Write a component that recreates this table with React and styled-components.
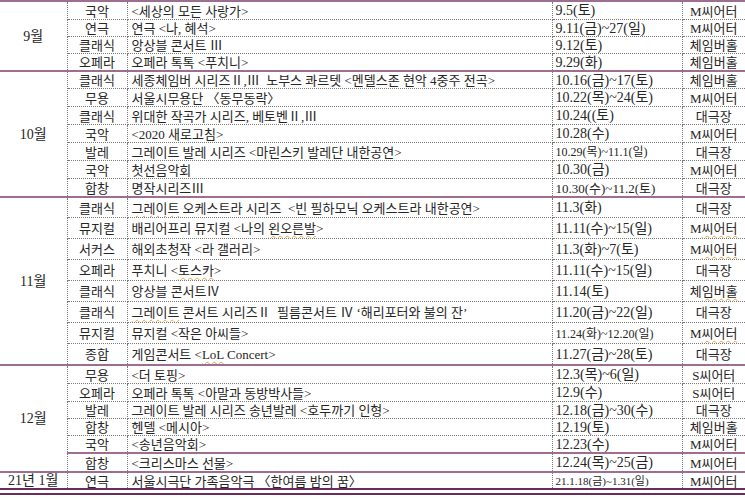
import React from "react";
import styled, { createGlobalStyle } from "styled-components";

const GlobalStyle = createGlobalStyle`
    html, body {
        margin: 0;
        padding: 0;
        background: #fff;
        overflow: hidden;
    }
`

const Page = styled.div`
    width: 745px;
    height: 503px;
    overflow: hidden;
    background: #fff;
`

const Table = styled.table`
    width: 745px;
    table-layout: fixed;
    border-collapse: collapse;
    font-family: "Liberation Serif", "Noto Sans CJK KR", serif;
    font-size: 13px;
    color: #262626;
`

const Col = styled.col`
    width: ${props => props.w}px;
`

// cell padding-top adds to the row, so take it off the height
const Row = styled.tr`
    & > td {
        height: ${props => props.h - 1}px;
        ${props => props.sep && "border-top: 2px solid #9c6f92;"}
        ${props => props.first && "border-top: 2px solid #9c6f92;"}
        ${props => props.last && "border-bottom: 7px double #6a2c5d;"}
    }
`

const Cell = styled.td`
    padding: 1px 0 0;
    line-height: 1;
    border: 1px dotted #7a7a7a;
    vertical-align: middle;
    white-space: nowrap;
    overflow: hidden;
`

const MonthCell = styled(Cell)`
    text-align: center;
    font-size: 14px;
    border-left: none;
    border-bottom: ${props => props.last ? "7px double #6a2c5d" : "2px solid #9c6f92"};
`

const GenreCell = styled(Cell)`
    text-align: center;
`

const TitleCell = styled(Cell)`
    padding-left: 4px;
`

const DateCell = styled(Cell)`
    padding-left: 3px;
    font-size: ${props => props.fs || 14}px;
`

const VenueCell = styled(Cell)`
    text-align: center;
    border-right: none;
`

const Sq = styled.span`
    text-decoration: underline wavy #e6a24c;
    text-decoration-thickness: 1px;
    text-underline-offset: 2px;
`

const venue = v => {
    if (v === "체임버홀") return <>체<Sq>임버홀</Sq></>;
    if (v.endsWith("씨어터")) return <>{v[0]}<Sq>씨어터</Sq></>;
    return v;
}

const rows = [
    { m: "9월", span: 4, h: 17, g: "국악", t: "<세상의 모든 사랑가>", d: "9.5(토)", v: "M씨어터" },
    { h: 16, g: "연극", t: <>연극 &lt;나, <Sq>혜석</Sq>&gt;</>, d: "9.11(금)~27(일)", v: "M씨어터" },
    { h: 16, g: "클래식", t: "앙상블 콘서트 Ⅲ", d: "9.12(토)", v: "체임버홀" },
    { h: 16, g: "오페라", t: "오페라 톡톡 <푸치니>", d: "9.29(화)", v: "체임버홀" },
    { m: "10월", span: 7, h: 16, g: "클래식", t: <><Sq>세종체임버</Sq> 시리즈Ⅱ,Ⅲ&nbsp;&nbsp;<Sq>노부스</Sq> 콰르텟 &lt;멘델스존 현악 4중주 전곡&gt;</>, d: "10.16(금)~17(토)", v: "체임버홀" },
    { h: 17, g: "무용", t: "서울시무용단 〈동무동락〉", d: "10.22(목)~24(토)", v: "M씨어터" },
    { h: 17, g: "클래식", t: "위대한 작곡가 시리즈, 베토벤Ⅱ,Ⅲ", d: "10.24((토)", v: "대극장" },
    { h: 17, g: "국악", t: <>&lt;2020 <Sq>새로고침</Sq>&gt;</>, d: "10.28(수)", v: "M씨어터" },
    { h: 17, g: "발레", t: <><Sq>그레이트</Sq> 발레 시리즈 &lt;마린스키 발레단 내한공연&gt;</>, d: "10.29(목)~11.1(일)", v: "대극장", fs: 12 },
    { h: 17, g: "국악", t: "첫선음악회", d: "10.30(금)", v: "M씨어터" },
    { h: 17, g: "합창", t: "명작시리즈Ⅲ", d: "10.30(수)~11.2(토)", v: "대극장", fs: 13 },
    { m: "11월", span: 8, h: 19, g: "클래식", t: <><Sq>그레이트</Sq> 오케스트라 시리즈&nbsp;&nbsp;&lt;빈 필하모닉 오케스트라 내한공연&gt;</>, d: "11.3(화)", v: "대극장" },
    { h: 20, g: "뮤지컬", t: <>배리어프리 뮤지컬 &lt;나의 <Sq>왼오른발</Sq>&gt;</>, d: "11.11(수)~15(일)", v: "M씨어터" },
    { h: 20, g: "서커스", t: "해외초청작 <라 갤러리>", d: "11.3(화)~7(토)", v: "M씨어터" },
    { h: 20, g: "오페라", t: <>푸치니 &lt;<Sq>토스카</Sq>&gt;</>, d: "11.11(수)~15(일)", v: "대극장" },
    { h: 20, g: "클래식", t: "앙상블 콘서트Ⅳ", d: "11.14(토)", v: "체임버홀" },
    { h: 20, g: "클래식", t: <><Sq>그레이트</Sq> 콘서트 시리즈Ⅱ&nbsp;&nbsp;필름콘서트 Ⅳ &lsquo;해리포터와 불의 잔&rsquo;</>, d: "11.20(금)~22(일)", v: "대극장" },
    { h: 20, g: "뮤지컬", t: "뮤지컬 <작은 아씨들>", d: "11.24(화)~12.20(일)", v: "M씨어터", fs: 12 },
    { h: 20, g: "종합", t: <>게임콘서트 &lt;<Sq>LoL</Sq> Concert&gt;</>, d: "11.27(금)~28(토)", v: "대극장" },
    { m: "12월", span: 6, h: 17, g: "무용", t: "<더 토핑>", d: "12.3(목)~6(일)", v: "S씨어터" },
    { h: 17, g: "오페라", t: <>오페라 톡톡 &lt;<Sq>아말과</Sq> 동방박사들&gt;</>, d: "12.9(수)", v: "S씨어터" },
    { h: 16, g: "발레", t: <><Sq>그레이트</Sq> 발레 시리즈 송년발레 &lt;호두까기 인형&gt;</>, d: "12.18(금)~30(수)", v: "대극장" },
    { h: 16, g: "합창", t: "헨델 <메시아>", d: "12.19(토)", v: "체임버홀" },
    { h: 16, g: "국악", t: "<송년음악회>", d: "12.23(수)", v: "M씨어터" },
    { h: 17, sep: true, g: "합창", t: "<크리스마스 선물>", d: "12.24(목)~25(금)", v: "M씨어터" },
    { m: "21년 1월", span: 1, h: 15, last: true, g: "연극", t: "서울시극단 가족음악극 〈한여름 밤의 꿈〉", d: "21.1.18(금)~1.31(일)", v: "M씨어터", fs: 11 },
]

const App = () => {
    return (
        <Page>
            <GlobalStyle />
            <Table>
                <colgroup>
                    <Col w={67} />
                    <Col w={60} />
                    <Col w={425} />
                    <Col w={130} />
                    <Col w={63} />
                </colgroup>
                <tbody>
                    {rows.map((r, idx) => (
                        <Row key={idx} h={r.h} first={idx === 0} sep={r.m || r.sep} last={r.last}>
                            {r.m && <MonthCell rowSpan={r.span} last={r.last}>{r.m}</MonthCell>}
                            <GenreCell>{r.g}</GenreCell>
                            <TitleCell>{r.t}</TitleCell>
                            <DateCell fs={r.fs}>{r.d}</DateCell>
                            <VenueCell>{venue(r.v)}</VenueCell>
                        </Row>
                    ))}
                </tbody>
            </Table>
        </Page>
    );
};

export default App;
